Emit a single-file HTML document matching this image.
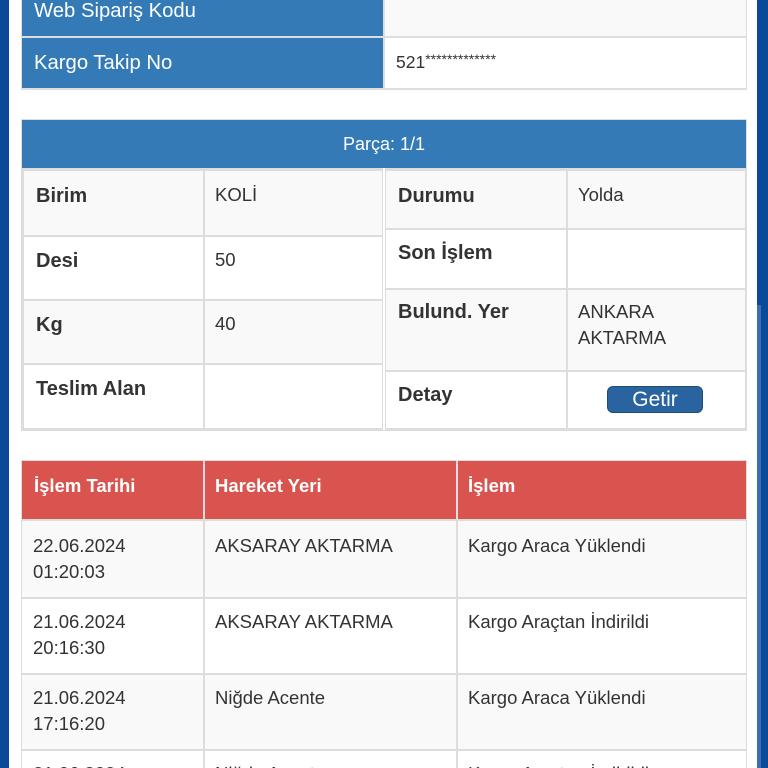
<!DOCTYPE html>
<html style="overflow:hidden;width:768px;height:768px"><head><meta charset="utf-8"><style>
body{margin:0;width:768px;height:768px;overflow:hidden;background:#fff;position:relative;font-family:"Liberation Sans",Arial,sans-serif;color:#333}
.c{position:absolute;box-sizing:border-box;padding-left:13px;overflow:hidden}
.bl{background:#337ab7;color:#fff;font-size:20.3px}
.g{background:#f9f9f9}.w{background:#fff}
.lb{font-weight:bold;font-size:20px}
.v{font-size:18.5px;line-height:26px}
.r{background:#d9534f;color:#fff;font-weight:bold;font-size:18.5px}
.bar{position:absolute;top:0;height:768px;background:#0b4a98}
</style></head><body>
<div class="bar" style="left:0;width:9px"></div>
<div class="bar" style="left:757px;width:11px"></div>
<div style="position:absolute;left:757px;top:305px;width:4px;height:463px;background:#3a6fb8"></div>

<div style="position:absolute;left:21px;top:-2px;width:726px;height:92px;background:#ddd"></div>
<div class="c bl" style="left:22px;top:-2px;width:361px;height:38px;line-height:26px;padding-left:12px">Web Sipariş Kodu</div>
<div class="c g" style="left:385px;top:-2px;width:361px;height:38px"></div>
<div class="c bl" style="left:22px;top:38px;width:361px;height:50px;line-height:50px;padding-left:12px">Kargo Takip No</div>
<div class="c w v" style="left:385px;top:38px;width:361px;height:50px;padding-left:11px;padding-top:11px;font-size:17.5px">521<span style="font-size:14px;vertical-align:top;position:relative;top:-3px">*************</span></div>

<div style="position:absolute;left:21px;top:119px;width:726px;height:312px;background:#ddd"></div>
<div style="position:absolute;left:22px;top:120px;width:724px;height:48px;background:#337ab7;color:#fff;font-size:18px;text-align:center;line-height:48px">Parça: 1/1</div>
<div style="position:absolute;left:383px;top:168px;width:2px;height:262px;background:#fff"></div>
<div class="c g lb" style="left:24px;top:171px;width:179px;height:64px;padding-top:14px;padding-left:12px">Birim</div>
<div class="c g v" style="left:205px;top:171px;width:177px;height:64px;padding-left:10px;padding-top:11px">KOLİ</div>
<div class="c w lb" style="left:24px;top:237px;width:179px;height:62px;padding-top:13px;padding-left:12px">Desi</div>
<div class="c w v" style="left:205px;top:237px;width:177px;height:62px;padding-left:10px;padding-top:10px">50</div>
<div class="c g lb" style="left:24px;top:301px;width:179px;height:62px;padding-top:13px;padding-left:12px">Kg</div>
<div class="c g v" style="left:205px;top:301px;width:177px;height:62px;padding-left:10px;padding-top:10px">40</div>
<div class="c w lb" style="left:24px;top:365px;width:179px;height:63px;padding-top:13px;padding-left:12px">Teslim Alan</div>
<div class="c w v" style="left:205px;top:365px;width:177px;height:63px"></div>
<div class="c g lb" style="left:386px;top:171px;width:180px;height:57px;padding-top:14px;padding-left:12px">Durumu</div>
<div class="c g v" style="left:568px;top:171px;width:177px;height:57px;padding-left:10px;padding-top:11px">Yolda</div>
<div class="c w lb" style="left:386px;top:230px;width:180px;height:58px;padding-top:12px;padding-left:12px">Son İşlem</div>
<div class="c w v" style="left:568px;top:230px;width:177px;height:58px"></div>
<div class="c g lb" style="left:386px;top:290px;width:180px;height:80px;padding-top:11px;padding-left:12px">Bulund. Yer</div>
<div class="c g v" style="left:568px;top:290px;width:177px;height:80px;padding-left:10px;padding-top:9px">ANKARA<br>AKTARMA</div>
<div class="c w lb" style="left:386px;top:372px;width:180px;height:56px;padding-top:12px;padding-left:12px">Detay</div>
<div class="c w" style="left:568px;top:372px;width:177px;height:56px"></div>
<div style="position:absolute;left:607px;top:386px;width:96px;height:27px;box-sizing:border-box;background:#2a64a0;border:1px solid #204d74;border-radius:6px;color:#fff;font-size:21px;text-align:center;line-height:26px">Getir</div>

<div style="position:absolute;left:21px;top:460px;width:726px;height:320px;background:#ddd"></div>
<div class="c r" style="left:22px;top:461px;width:181px;height:58px;padding-left:12px;padding-top:14px">İşlem Tarihi</div>
<div class="c r" style="left:205px;top:461px;width:251px;height:58px;padding-left:10px;padding-top:14px">Hareket Yeri</div>
<div class="c r" style="left:458px;top:461px;width:288px;height:58px;padding-left:10px;padding-top:14px">İşlem</div>

<div class="c g v" style="left:22px;top:521px;width:181px;height:76px;padding-left:11px;padding-top:12px">22.06.2024<br>01:20:03</div>
<div class="c g v" style="left:205px;top:521px;width:251px;height:76px;padding-left:10px;padding-top:12px">AKSARAY AKTARMA</div>
<div class="c g v" style="left:458px;top:521px;width:288px;height:76px;padding-left:10px;padding-top:12px">Kargo Araca Yüklendi</div>

<div class="c w v" style="left:22px;top:599px;width:181px;height:74px;padding-left:11px;padding-top:10px">21.06.2024<br>20:16:30</div>
<div class="c w v" style="left:205px;top:599px;width:251px;height:74px;padding-left:10px;padding-top:10px">AKSARAY AKTARMA</div>
<div class="c w v" style="left:458px;top:599px;width:288px;height:74px;padding-left:10px;padding-top:10px">Kargo Araçtan İndirildi</div>

<div class="c g v" style="left:22px;top:675px;width:181px;height:74px;padding-left:11px;padding-top:10px">21.06.2024<br>17:16:20</div>
<div class="c g v" style="left:205px;top:675px;width:251px;height:74px;padding-left:10px;padding-top:10px">Niğde Acente</div>
<div class="c g v" style="left:458px;top:675px;width:288px;height:74px;padding-left:10px;padding-top:10px">Kargo Araca Yüklendi</div>

<div class="c w v" style="left:22px;top:751px;width:181px;height:17px;padding-left:11px;padding-top:10px">21.06.2024</div>
<div class="c w v" style="left:205px;top:751px;width:251px;height:17px;padding-left:10px;padding-top:10px">Niğde Acente</div>
<div class="c w v" style="left:458px;top:751px;width:288px;height:17px;padding-left:10px;padding-top:10px">Kargo Araçtan İndirildi</div>
</body></html>
